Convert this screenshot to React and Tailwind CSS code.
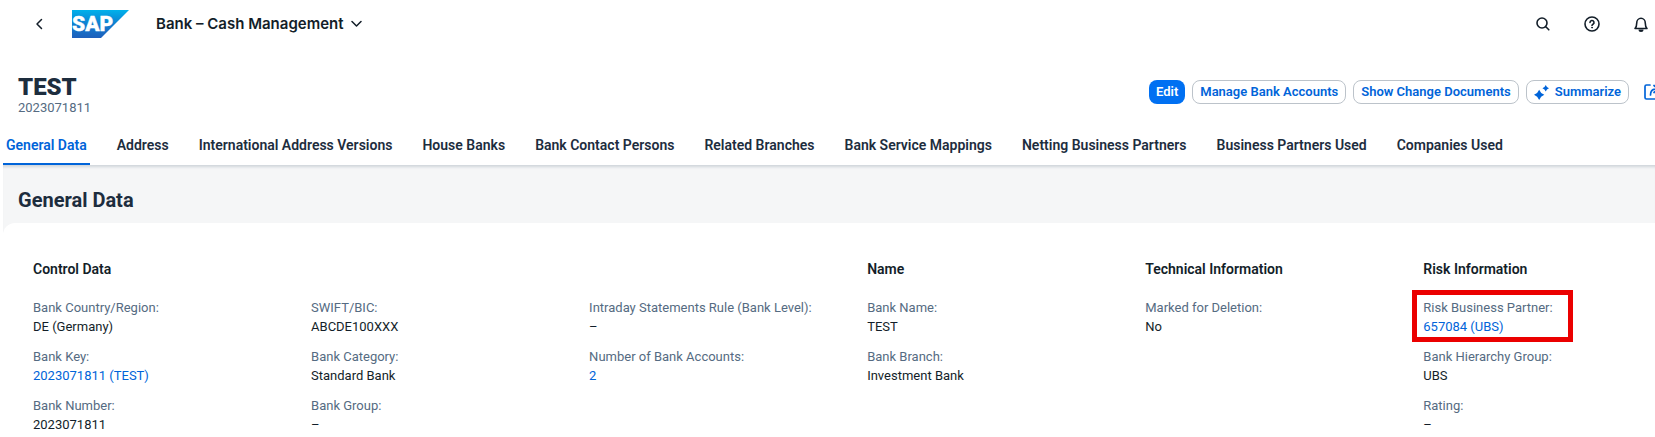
import React, { useState } from 'react';

const tabs = [
  'General Data',
  'Address',
  'International Address Versions',
  'House Banks',
  'Bank Contact Persons',
  'Related Branches',
  'Bank Service Mappings',
  'Netting Business Partners',
  'Business Partners Used',
  'Companies Used',
];

const columns = [
  {
    title: 'Control Data',
    fields: [
      { label: 'Bank Country/Region:', value: 'DE (Germany)' },
      { label: 'Bank Key:', value: '2023071811 (TEST)', link: true },
      { label: 'Bank Number:', value: '2023071811' },
    ],
  },
  {
    title: '',
    fields: [
      { label: 'SWIFT/BIC:', value: 'ABCDE100XXX' },
      { label: 'Bank Category:', value: 'Standard Bank' },
      { label: 'Bank Group:', value: '–' },
    ],
  },
  {
    title: '',
    fields: [
      { label: 'Intraday Statements Rule (Bank Level):', value: '–' },
      { label: 'Number of Bank Accounts:', value: '2', link: true },
    ],
  },
  {
    title: 'Name',
    fields: [
      { label: 'Bank Name:', value: 'TEST' },
      { label: 'Bank Branch:', value: 'Investment Bank' },
    ],
  },
  {
    title: 'Technical Information',
    fields: [{ label: 'Marked for Deletion:', value: 'No' }],
  },
  {
    title: 'Risk Information',
    fields: [
      { label: 'Risk Business Partner:', value: '657084 (UBS)', link: true, marked: true },
      { label: 'Bank Hierarchy Group:', value: 'UBS' },
      { label: 'Rating:', value: '–' },
    ],
  },
];

function SapLogo() {
  return (
    <svg width="57" height="28" viewBox="0 0 57 28" role="img" aria-label="SAP">
      <defs>
        <linearGradient id="sap-blue" x1="0" y1="0" x2="0" y2="1">
          <stop offset="0" stopColor="#00b1eb" />
          <stop offset="0.5" stopColor="#0f7fd0" />
          <stop offset="1" stopColor="#1e5fbb" />
        </linearGradient>
      </defs>
      <path d="M0 0h57L29 28H0z" fill="url(#sap-blue)" />
      <text x="0" y="21" fill="#fff" stroke="#fff" strokeWidth="0.4" fontFamily="Roboto, sans-serif" fontWeight="900" fontSize="21">SAP</text>
    </svg>
  );
}

function Field({ field }) {
  return (
    <div className="relative">
      <dt className="text-[#556b82]">{field.label}</dt>
      <dd className="text-[#131e29]">
        {field.link ? <a href="#" className="text-[#0064d9]">{field.value}</a> : field.value}
      </dd>
      {field.marked && (
        <div className="pointer-events-none absolute -top-2 -left-[11px] h-[52px] w-[161px] border-[5px] border-[#eb0000]" />
      )}
    </div>
  );
}

export default function App() {
  const [activeTab, setActiveTab] = useState('General Data');
  const outlined = 'h-6 rounded-lg border border-[#bcc3ca] px-[7px] text-[#0064d9]';

  return (
    <div className="overflow-x-hidden bg-white font-['Roboto','Liberation_Sans',sans-serif] text-sm text-[#131e29]">
      <header className="flex h-12 items-center pl-[33px] pr-[6px]">
        <button aria-label="Back" className="mr-[27px]">
          <svg width="12" height="12" viewBox="0 0 12 12" fill="none" stroke="#131e29" strokeWidth="1.5" strokeLinecap="round" strokeLinejoin="round">
            <path d="M8.500 1.500 4 6l4.500 4.500" />
          </svg>
        </button>
        <SapLogo />
        <button className="ml-[27px] flex items-center gap-[7px] font-['Inter','Open_Sans',sans-serif] text-[15px] font-semibold">
          Bank – Cash Management
          <svg width="11" height="8" viewBox="0 0 11 8" fill="none" stroke="#131e29" strokeWidth="1.5" strokeLinecap="round" strokeLinejoin="round">
            <path d="M1 1.500 5.500 6 10 1.500" />
          </svg>
        </button>
        <div className="ml-auto flex items-center gap-[33px]">
          <button aria-label="Search">
            <svg width="16" height="16" viewBox="0 0 16 16" fill="none" stroke="#131e29" strokeWidth="1.6" strokeLinecap="round">
              <circle cx="7" cy="7" r="5" />
              <path d="m10.800 10.800 3 3" />
            </svg>
          </button>
          <button aria-label="Help">
            <svg width="16" height="16" viewBox="0 0 16 16" fill="none" stroke="#131e29" strokeWidth="1.6" strokeLinecap="round" strokeLinejoin="round">
              <circle cx="8" cy="8" r="7" />
              <path d="M6 6.500a2 2 0 1 1 3 1.700c-.7.4-1 .7-1 1.300" />
              <circle cx="8" cy="11.700" r=".4" fill="#131e29" strokeWidth="1" />
            </svg>
          </button>
          <button aria-label="Notifications">
            <svg width="16" height="16" viewBox="0 0 16 16" fill="none" stroke="#131e29" strokeWidth="1.6" strokeLinejoin="round">
              <path d="M2 12.500c1.300-1.200 1.700-2.500 1.700-5.300a4.300 5 0 0 1 8.600 0c0 2.800.4 4.100 1.700 5.300z" />
              <path d="M5.500 13.500h5a2.500 2.500 0 0 1-5 0z" fill="#131e29" stroke="none" />
            </svg>
          </button>
        </div>
      </header>

      <div className="flex items-start justify-between pt-[26px] pl-[18px]">
        <div>
          <h1 className="text-2xl leading-[26px] font-black text-[#1d2d3e]">TEST</h1>
          <p className="text-[13px] leading-4 text-[#556b82]">2023071811</p>
        </div>
        <div className="flex items-center gap-[7px] pt-[6px] text-[13px] font-semibold">
          <button className="h-6 rounded-lg bg-[#0070f2] px-[7px] text-white">Edit</button>
          <button className={outlined}>Manage Bank Accounts</button>
          <button className={outlined}>Show Change Documents</button>
          <button className={`${outlined} flex items-center gap-[6px]`}>
            <svg width="15" height="15" viewBox="0 0 16 16" fill="#0064d9">
              <path d="M5.500 5q1.500 4 5.500 5.500-4 1.500-5.500 5.500-1.500-4-5.500-5.500 4-1.500 5.500-5.500z" />
              <path d="M12.500 0q.9 2.600 3.500 3.500-2.600.9-3.500 3.500-.9-2.600-3.500-3.500 2.600-.9 3.500-3.500z" />
            </svg>
            Summarize
          </button>
          <button aria-label="Share" className="ml-2 w-[11px] overflow-hidden">
            <svg width="16" height="16" viewBox="0 0 16 16" fill="none" stroke="#0064d9" strokeWidth="1.7" strokeLinecap="round" strokeLinejoin="round" className="max-w-none">
              <path d="M6 1H2.500Q1 1 1 2.500v11Q1 15 2.500 15h11q1.500 0 1.500-1.500V12M6.500 11c0-4 1.500-6 5.500-6M10 1.500 14 5l-4 3.500" />
            </svg>
          </button>
        </div>
      </div>

      <nav className="flex gap-6 pt-3 pl-[3px] font-semibold">
        {tabs.map((tab) => (
          <button
            key={tab}
            onClick={() => setActiveTab(tab)}
            className={`h-[37px] border-b-2 px-[3px] pb-0.5 whitespace-nowrap ${activeTab === tab ? 'border-[#0064d9] text-[#0064d9]' : 'border-transparent text-[#1d2d3e]'}`}
          >
            {tab}
          </button>
        ))}
      </nav>

      <main className="ml-[3px] bg-[#f5f6f7] shadow-[inset_0_4px_3px_-2px_#cfd5da]">
        <h2 className="px-[15px] pt-[23px] pb-[11px] text-xl leading-6 font-bold text-[#1d2d3e]">General Data</h2>
        <section className="grid grid-cols-[repeat(5,12fr)_10fr] rounded-tl-xl bg-white pt-[37px] pl-[30px]">
          {columns.map((column, i) => (
            <div key={i} className="leading-[19px]">
              <h3 className="h-[19px] font-semibold">{column.title}</h3>
              <dl className="flex flex-col gap-[11px] pt-[19px] text-[13px] leading-[19px]">
                {column.fields.map((field) => <Field key={field.label} field={field} />)}
              </dl>
            </div>
          ))}
        </section>
      </main>
    </div>
  );
}
